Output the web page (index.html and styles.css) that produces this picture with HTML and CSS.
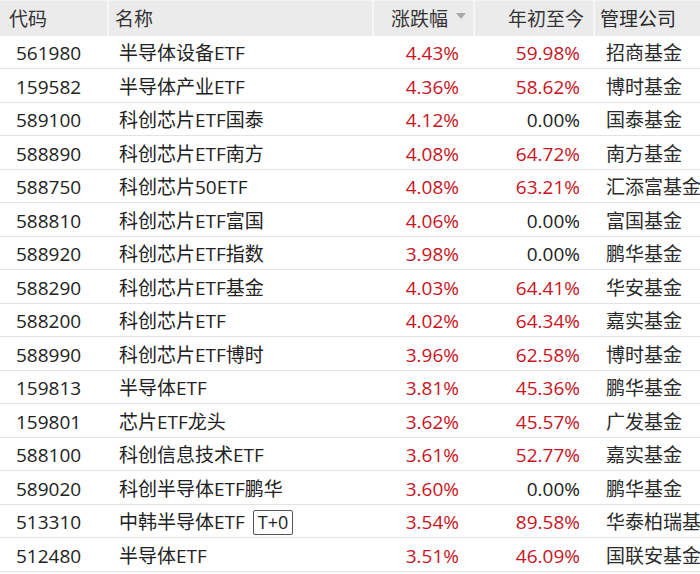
FILE: index.html
```html
<!DOCTYPE html>
<html lang="zh">
<head>
<meta charset="utf-8">
<link rel="stylesheet" href="styles.css">
</head>
<body>
<div class="table">
  <div class="row head">
    <div class="c code">代码</div>
    <div class="c name">名称</div>
    <div class="c chg">涨跌幅<span class="tri"></span></div>
    <div class="c ytd">年初至今</div>
    <div class="c co">管理公司</div>
  </div>
  <div class="row"><div class="c code">561980</div><div class="c name">半导体设备ETF</div><div class="c chg">4.43%</div><div class="c ytd">59.98%</div><div class="c co">招商基金</div></div>
  <div class="row"><div class="c code">159582</div><div class="c name">半导体产业ETF</div><div class="c chg">4.36%</div><div class="c ytd">58.62%</div><div class="c co">博时基金</div></div>
  <div class="row"><div class="c code">589100</div><div class="c name">科创芯片ETF国泰</div><div class="c chg">4.12%</div><div class="c ytd zero">0.00%</div><div class="c co">国泰基金</div></div>
  <div class="row"><div class="c code">588890</div><div class="c name">科创芯片ETF南方</div><div class="c chg">4.08%</div><div class="c ytd">64.72%</div><div class="c co">南方基金</div></div>
  <div class="row"><div class="c code">588750</div><div class="c name">科创芯片50ETF</div><div class="c chg">4.08%</div><div class="c ytd">63.21%</div><div class="c co">汇添富基金</div></div>
  <div class="row"><div class="c code">588810</div><div class="c name">科创芯片ETF富国</div><div class="c chg">4.06%</div><div class="c ytd zero">0.00%</div><div class="c co">富国基金</div></div>
  <div class="row"><div class="c code">588920</div><div class="c name">科创芯片ETF指数</div><div class="c chg">3.98%</div><div class="c ytd zero">0.00%</div><div class="c co">鹏华基金</div></div>
  <div class="row"><div class="c code">588290</div><div class="c name">科创芯片ETF基金</div><div class="c chg">4.03%</div><div class="c ytd">64.41%</div><div class="c co">华安基金</div></div>
  <div class="row"><div class="c code">588200</div><div class="c name">科创芯片ETF</div><div class="c chg">4.02%</div><div class="c ytd">64.34%</div><div class="c co">嘉实基金</div></div>
  <div class="row"><div class="c code">588990</div><div class="c name">科创芯片ETF博时</div><div class="c chg">3.96%</div><div class="c ytd">62.58%</div><div class="c co">博时基金</div></div>
  <div class="row"><div class="c code">159813</div><div class="c name">半导体ETF</div><div class="c chg">3.81%</div><div class="c ytd">45.36%</div><div class="c co">鹏华基金</div></div>
  <div class="row"><div class="c code">159801</div><div class="c name">芯片ETF龙头</div><div class="c chg">3.62%</div><div class="c ytd">45.57%</div><div class="c co">广发基金</div></div>
  <div class="row"><div class="c code">588100</div><div class="c name">科创信息技术ETF</div><div class="c chg">3.61%</div><div class="c ytd">52.77%</div><div class="c co">嘉实基金</div></div>
  <div class="row"><div class="c code">589020</div><div class="c name">科创半导体ETF鹏华</div><div class="c chg">3.60%</div><div class="c ytd zero">0.00%</div><div class="c co">鹏华基金</div></div>
  <div class="row"><div class="c code">513310</div><div class="c name">中韩半导体ETF<span class="badge">T+0</span></div><div class="c chg">3.54%</div><div class="c ytd">89.58%</div><div class="c co">华泰柏瑞基金</div></div>
  <div class="row"><div class="c code">512480</div><div class="c name">半导体ETF</div><div class="c chg">3.51%</div><div class="c ytd">46.09%</div><div class="c co">国联安基金</div></div>
</div>
</body>
</html>
```

FILE: styles.css
```css
html, body {
  margin: 0;
  padding: 0;
  background: #ffffff;
}
body {
  width: 700px;
  height: 574px;
  overflow: hidden;
  font-family: "Open Sans", "Noto Sans CJK SC", sans-serif;
  font-size: 19px;
  color: #222222;
}
.table {
  width: 700px;
}
.row {
  display: grid;
  grid-template-columns: 107px 265px 101px 120px 107px;
  height: 33.53px;
  border-bottom: 1px solid #e3e3e3;
  box-sizing: border-box;
  align-items: center;
}
.row.head {
  height: 35.5px;
  background: #ebebeb;
  border-bottom: none;
  border-top: 1px solid #f4f4f4;
  color: #333333;
  align-items: stretch;
}
.c {
  white-space: nowrap;
  overflow: hidden;
  line-height: 30px;
  padding-top: 3px;
}
.head .c {
  display: flex;
  align-items: center;
  border-left: 2px solid #f6f6f6;
  line-height: normal;
  padding-top: 0;
}
.head .c:first-child {
  border-left: none;
}
.code { padding-left: 16px; }
.name { padding-left: 12px; display: flex; align-items: center; }
.chg { text-align: right; padding-right: 14px; color: #c8141e; }
.ytd { text-align: right; padding-right: 13px; color: #c8141e; }
.ytd.zero { color: #222222; }
.co { padding-left: 13px; color: #2a2a2a; }

.head .code { padding-left: 9px; }
.head .name { padding-left: 6px; }
.head .chg { justify-content: flex-end; padding-right: 7px; color: #333333; }
.head .ytd { justify-content: flex-end; padding-right: 9px; color: #333333; }
.head .co { padding-left: 5px; }

.tri {
  display: inline-block;
  width: 0;
  height: 0;
  margin-left: 8px;
  margin-top: -4px;
  border-left: 5px solid transparent;
  border-right: 5px solid transparent;
  border-top: 6px solid #a8a8a8;
}
.badge {
  display: inline-block;
  margin-left: 8px;
  padding: 0 4px;
  height: 25px;
  line-height: 23px;
  border: 1px solid #555555;
  border-radius: 2px;
  box-sizing: border-box;
  font-size: 18px;
}
```
